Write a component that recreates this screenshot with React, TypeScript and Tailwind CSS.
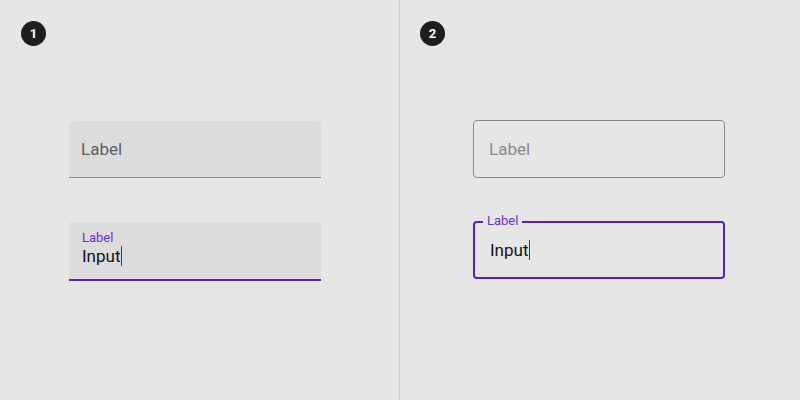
import React from "react";

function Badge({ n }: { n: string }) {
  return (
    <div className="w-[25px] h-[25px] rounded-full bg-[#1e1e1e] text-white flex items-center justify-center text-[13px] font-bold leading-none">
      {n}
    </div>
  );
}

export default function App() {
  return (
    <div className="w-[800px] h-[400px] bg-[#e6e6e6] flex font-['Roboto',sans-serif]">
      <div className="w-[399px] h-full pt-[21px] pl-[21px]">
        <Badge n="1" />
        <div className="ml-[48px] mt-[75px] w-[252px] flex flex-col">
          <div className="h-[57px] bg-[#dcdcdc] rounded-t-[4px] border-b border-[#8c8c8c] flex items-center px-[12px] pt-[1px]">
            <span className="text-[17px] text-[#5e5e5e] leading-none">Label</span>
          </div>
          <div className="mt-[44px] h-[59px] bg-[#dcdcdc] rounded-t-[4px] border-b-2 border-[#5a1fc4] flex flex-col px-[13px] pt-[8px]">
            <span className="text-[13px] text-[#6a2fd6] leading-[15px]">Label</span>
            <span className="mt-[1px] text-[17px] text-[#111] leading-[20px] flex items-center">
              Input<span className="inline-block w-[1.5px] h-[20px] bg-[#5a1fc4]" />
            </span>
          </div>
        </div>
      </div>
      <div className="w-px h-full bg-[#cbcbcb]" />
      <div className="flex-1 h-full pt-[21px] pl-[20px]">
        <Badge n="2" />
        <div className="ml-[53px] mt-[74px] w-[252px] flex flex-col">
          <div className="h-[58px] rounded-[4px] border border-[#8a8a8a] flex items-center px-[15px]">
            <span className="text-[17px] text-[#8a8a8a] leading-none">Label</span>
          </div>
          <div className="relative mt-[43px] h-[58px] rounded-[4px] border-2 border-[#5a1fc4] flex items-center px-[15px]">
            <span className="absolute -top-[10px] left-[8px] px-[4px] bg-[#e6e6e6] text-[13px] text-[#6a2fd6] leading-[15px]">
              Label
            </span>
            <span className="text-[17px] text-[#111] leading-[20px] flex items-center">
              Input<span className="inline-block w-[1.5px] h-[20px] bg-[#5a1fc4]" />
            </span>
          </div>
        </div>
      </div>
    </div>
  );
}
